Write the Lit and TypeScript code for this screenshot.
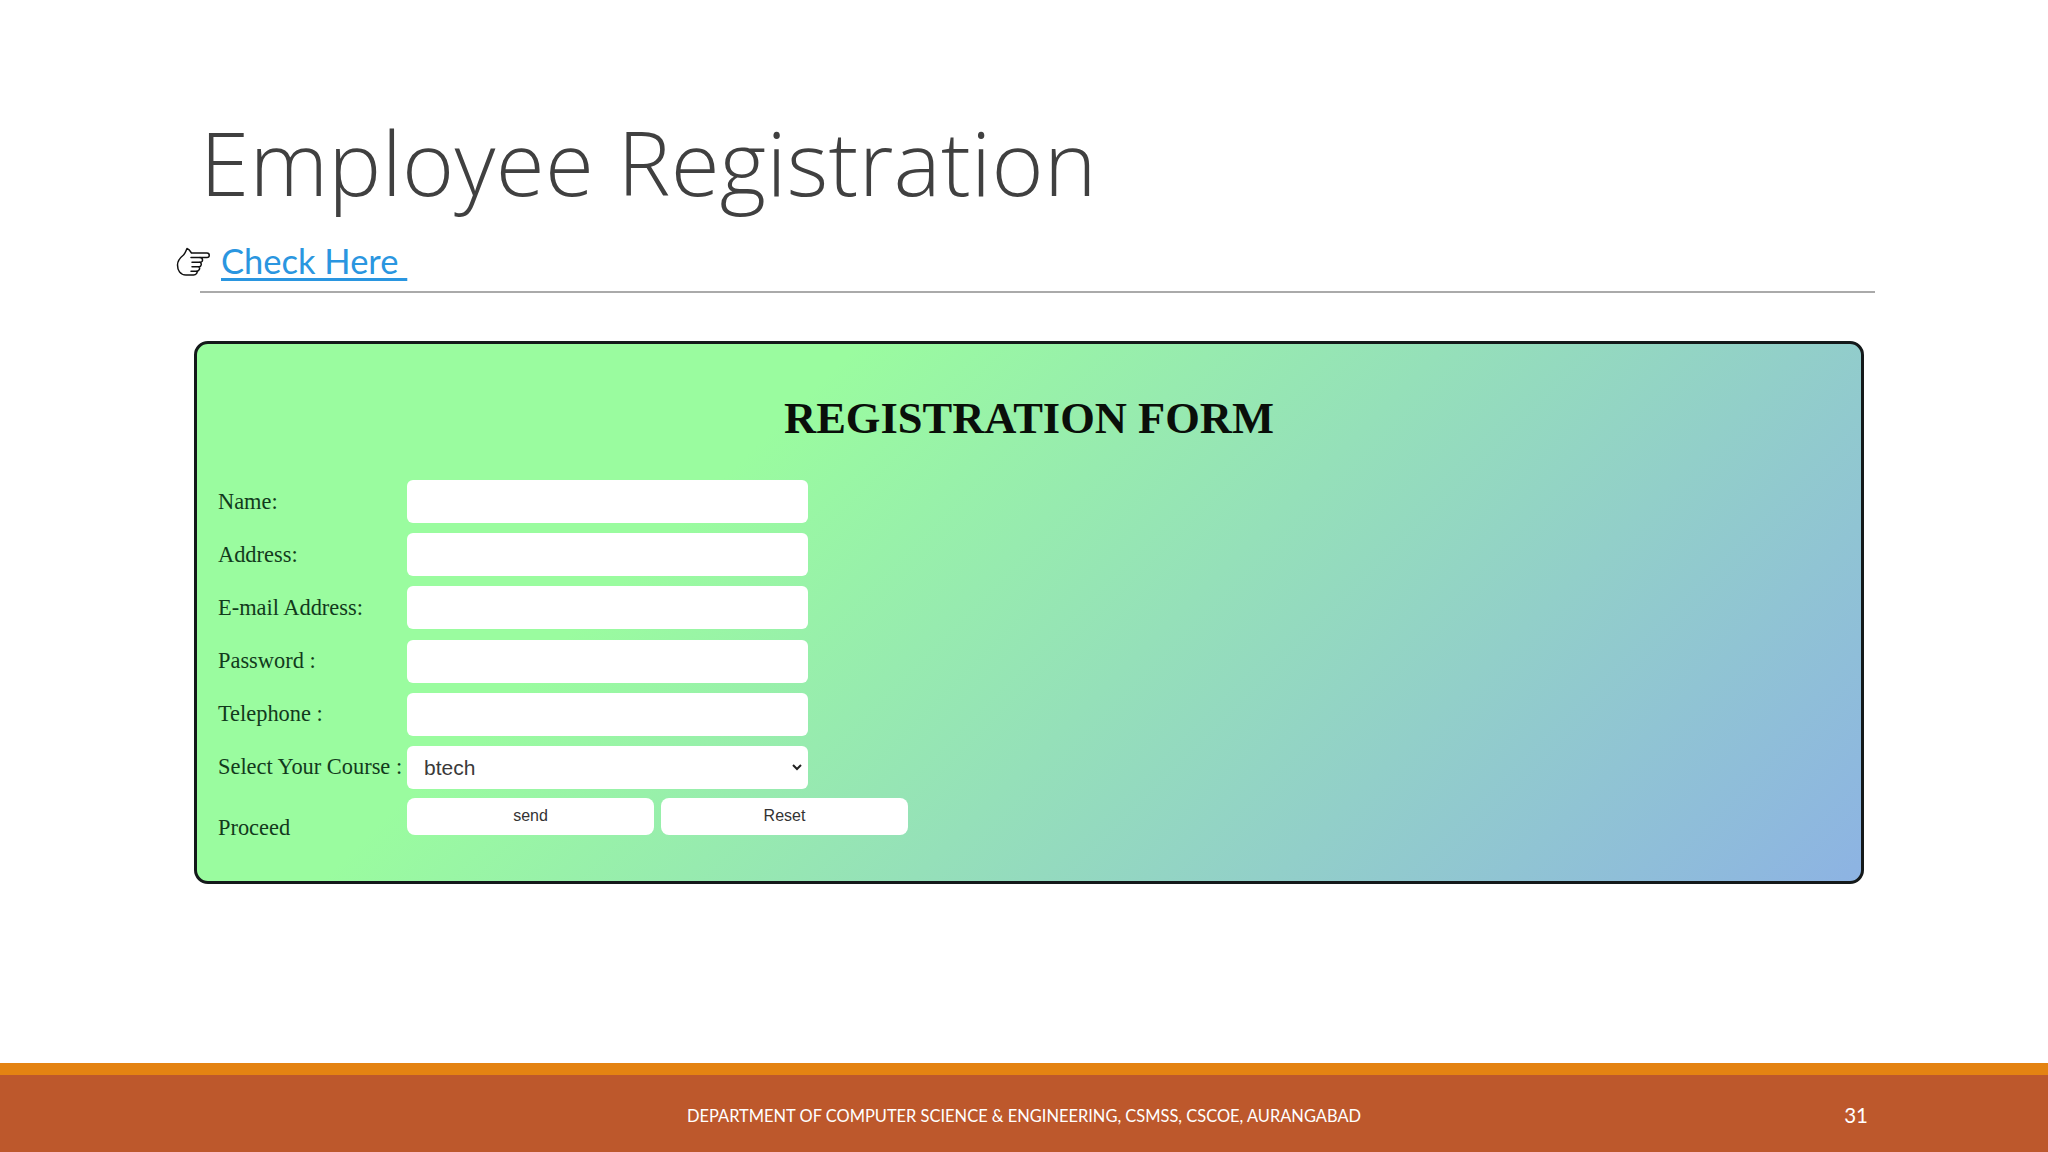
import { LitElement, html, css } from "lit";
import { customElement } from "lit/decorators.js";

const rows = ["Name:", "Address:", "E-mail Address:", "Password :", "Telephone :"];

@customElement("app-root")
export class AppRoot extends LitElement {
  static styles = css`
    :host {
      display: flex;
      flex-direction: column;
      width: 2048px;
      height: 1152px;
      background: #ffffff;
      overflow: hidden;
      font-family: "Lato", "Open Sans", sans-serif;
    }
    .slide {
      flex: 1;
      display: flex;
      flex-direction: column;
      padding-top: 106px;
    }
    h1 {
      margin: 0 0 0 200px;
      font-family: "Open Sans", sans-serif;
      font-size: 89px;
      letter-spacing: 0.3px;
      line-height: 112px;
      font-weight: 300;
      color: #404040;
      white-space: nowrap;
    }
    .link-row {
      display: flex;
      align-items: flex-end;
      margin: 20px 0 0 176px;
      height: 46px;
    }
    .hand {
      width: 36px;
      height: 30px;
      margin: 0 9px 7px 0;
      flex: none;
    }
    a {
      font-size: 34.5px;
      line-height: 46px;
      color: #2a96e0;
      white-space: pre;
      font-variant-ligatures: none;
      text-decoration: underline;
      text-decoration-thickness: 2.5px;
      text-underline-offset: 4px;
    }
    .rule {
      height: 2px;
      margin: 7px 173px 0 200px;
      background: #aaaaaa;
    }
    .card {
      box-sizing: border-box;
      width: 1670px;
      height: 543px;
      margin: 48px 0 0 194px;
      padding: 49px 21px 0 21px;
      border: 3px solid #14191a;
      border-radius: 14px;
      background: linear-gradient(135deg, #9afc9f 30%, #8db3e3 100%);
    }
    h2 {
      margin: 0;
      text-align: center;
      font-family: "Liberation Serif", serif;
      font-size: 44.5px;
      line-height: 50px;
      font-weight: 700;
      color: #0a0f0a;
    }
    form {
      display: grid;
      grid-template-columns: 189px auto;
      justify-content: start;
      row-gap: 10.2px;
      margin-top: 37px;
      font-family: "Liberation Serif", serif;
      font-size: 22.4px;
      color: #123a1c;
    }
    label {
      display: flex;
      align-items: center;
      white-space: nowrap;
      height: 43px;
    }
    label.proceed {
      height: 37px;
      padding-top: 10px;
    }
    input,
    select {
      box-sizing: border-box;
      width: 401px;
      height: 43px;
      margin: 0;
      border: none;
      border-radius: 6px;
      background: #ffffff;
      outline: none;
    }
    select {
      appearance: none;
      padding: 0 0 0 17px;
      font-family: "Liberation Sans", sans-serif;
      font-size: 21px;
      color: #3a3a3a;
      background: #ffffff
        url("data:image/svg+xml,%3Csvg xmlns='http://www.w3.org/2000/svg' width='10' height='7'%3E%3Cpath d='M1 1l4 4 4-4' fill='none' stroke='%23222' stroke-width='2'/%3E%3C/svg%3E")
        no-repeat 385px 50%;
    }
    .buttons {
      display: flex;
      gap: 7px;
      margin-top: -1.5px;
    }
    button {
      box-sizing: border-box;
      width: 247px;
      height: 37px;
      border: none;
      border-radius: 8px;
      background: #ffffff;
      font-family: "Liberation Sans", sans-serif;
      font-size: 16px;
      color: #333333;
    }
    .footer {
      flex: none;
      height: 77px;
      border-top: 12px solid #e48312;
      background: #bd582c;
      display: grid;
      grid-template-columns: 1fr auto;
      align-items: center;
      color: #ffffff;
    }
    .dept {
      grid-column: 1 / 3;
      grid-row: 1;
      justify-self: center;
      padding-top: 5px;
      font-size: 16.45px;
      white-space: nowrap;
    }
    .num {
      grid-column: 2;
      grid-row: 1;
      margin-right: 180px;
      padding-top: 3px;
      font-size: 20.5px;
    }
  `;

  render() {
    return html`
      <div class="slide">
        <h1>Employee Registration</h1>
        <div class="link-row">
          <svg class="hand" viewBox="0 0 36 30" fill="#fff" stroke="#111" stroke-width="1.5" stroke-linejoin="round" stroke-linecap="round">
            <path d="M11 1.500c2 .5 3 2 4.500 4.500 H31 c3 0 3 4.500 0 4.500 H24 c3 0 3.500 4.500 .5 4.800 H24 c2 .7 1.500 4.400 -1 4.500 c1.200 1 .5 4.200 -2 4.400 c.5 1.500 -.7 3.800 -3.500 3.800 H10 C4 28 1.500 23 1.500 18 C1.500 13 5 10 7.500 8 C9 6.500 10 4 11 1.500 Z" />
            <path d="M15 10.500 H24 M16 15.300 H24 M16 19.800 H23 M15 24.200 H21" fill="none" />
          </svg>
          <a href="#">Check Here </a>
        </div>
        <div class="rule"></div>
        <div class="card">
          <h2>REGISTRATION FORM</h2>
          <form @submit=${(e: Event) => e.preventDefault()}>
            ${rows.map((r) => html`<label>${r}</label><input type="text" />`)}
            <label>Select Your Course :</label>
            <select><option>btech</option></select>
            <label class="proceed">Proceed</label>
            <div class="buttons">
              <button type="button">send</button>
              <button type="button">Reset</button>
            </div>
          </form>
        </div>
      </div>
      <div class="footer">
        <span class="dept">DEPARTMENT OF COMPUTER SCIENCE &amp; ENGINEERING, CSMSS, CSCOE, AURANGABAD</span>
        <span class="num">31</span>
      </div>
    `;
  }
}
